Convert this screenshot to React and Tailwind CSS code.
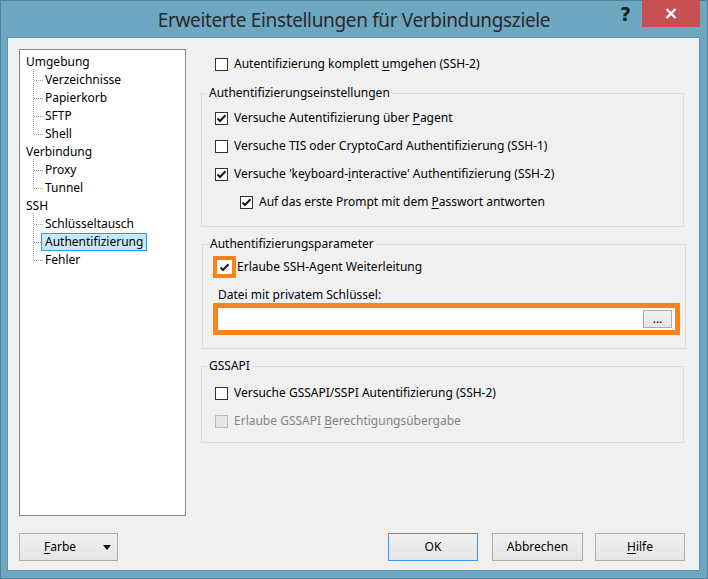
import React from "react";

const FONT = "font-['Noto_Sans',sans-serif]";

function Check({ disabled }) {
  return (
    <svg width="13" height="13" viewBox="0 0 13 13" className="block">
      <path d="M2.5 6.5 L5 9 L10.5 3.2" fill="none" stroke={disabled ? "#9a9a9a" : "#1a1a1a"} strokeWidth="2" />
    </svg>
  );
}

function CheckBox({ checked, disabled }) {
  return (
    <div
      className={
        "w-[13px] h-[13px] shrink-0 border " +
        (disabled ? "border-[#bcbcbc] bg-[#e6e6e6]" : "border-[#333333] bg-white")
      }
    >
      {checked ? <div className="-m-px"><Check disabled={disabled} /></div> : null}
    </div>
  );
}

function Row({ checked, disabled, children, indent = "pl-[13px]" }) {
  return (
    <div className={"flex items-center h-[18px] " + indent}>
      <CheckBox checked={checked} disabled={disabled} />
      <span className={"ml-[6px] text-[12px] leading-[16px] whitespace-nowrap " + (disabled ? "text-[#838383]" : "text-black")}>
        {children}
      </span>
    </div>
  );
}

function TreeGroup({ label, items, selected }) {
  return (
    <div>
      <div className="h-[18px] flex items-center pl-[2px]">
        <span className="border border-transparent px-[3px] leading-[16px]">{label}</span>
      </div>
      <div className="relative">
        <div
          className="absolute left-[13px] top-[-2px] w-0 border-l border-dotted border-[#a0a0a0]"
          style={{ height: (items.length - 1) * 18 + 11 }}
        />
        {items.map((it) => (
          <div key={it} className="h-[18px] flex items-center">
            <span className="w-[14px] shrink-0" />
            <span className="w-[9px] shrink-0 border-t border-dotted border-[#a0a0a0]" />
            <span
              className={
                "-ml-[2px] px-[3px] leading-[16px] border relative " +
                (it === selected ? "bg-[#cbe8f6] border-[#26a0da]" : "border-transparent")
              }
            >
              {it}
            </span>
          </div>
        ))}
      </div>
    </div>
  );
}

function Btn({ children, className = "", focus }) {
  return (
    <div
      className={
        "h-[28px] flex items-center justify-center text-[12px] text-black bg-gradient-to-b from-[#f0f0f0] to-[#e5e5e5] border " +
        (focus ? "border-[#3399ff] " : "border-[#acacac] ") +
        className
      }
    >
      {children}
    </div>
  );
}

export default function App() {
  return (
    <div className={"w-[708px] h-[579px] bg-[#6ea7c2] border border-[#4f819b] flex flex-col " + FONT}>
      <div className="relative h-[36px] flex items-center justify-center">
        <span className="text-[19px] text-[#2a2a2a] tracking-[-0.35px] mt-[3px]">
          Erweiterte Einstellungen für Verbindungsziele
        </span>
        <div className="absolute right-[7px] top-[-1px] flex items-start">
          <span className="text-[19px] font-bold text-[#1f1f1f] leading-[22px] mr-[11px] mt-[3px] font-['DejaVu_Sans',sans-serif]">?</span>
          <div className="w-[58px] h-[27px] bg-[#c75050] flex items-center justify-center">
            <svg width="12" height="11" viewBox="0 0 12 11">
              <path d="M1.5 1 L10.5 10 M10.5 1 L1.5 10" stroke="white" strokeWidth="2.4" />
            </svg>
          </div>
        </div>
      </div>
      <div className="ml-[6px] mr-[7px] h-[534px] border border-[#5e93ad] bg-[#f0f0f0] flex flex-col">
        <div className="flex items-start pt-[11px] pl-[11px]">
          <div className="w-[167px] h-[467px] bg-white border border-[#828790] pt-[3px] text-[12px] text-black">
            <TreeGroup label="Umgebung" items={["Verzeichnisse", "Papierkorb", "SFTP", "Shell"]} />
            <TreeGroup label="Verbindung" items={["Proxy", "Tunnel"]} />
            <TreeGroup label="SSH" items={["Schlüsseltausch", "Authentifizierung", "Fehler"]} selected="Authentifizierung" />
          </div>
          <div className="ml-[15px] flex flex-col">
            <div className="mt-[6px]">
              <Row indent="pl-[14px]">
                Autentifizierung komplett <u className="underline-offset-2">u</u>mgehen (SSH-2)
              </Row>
            </div>
            <fieldset className="mt-[12px] w-[483px] border border-[#dcdcdc] pt-[8px] pb-[15px] flex flex-col gap-[10px]">
              <legend className="ml-[5px] px-[2px] text-[12px] leading-[16px] text-black">Authentifizierungseinstellungen</legend>
              <Row checked>
                Versuche Autentifizierung über <u className="underline-offset-2">P</u>agent
              </Row>
              <Row>Versuche TIS oder CryptoCard Authentifizierung (SSH-1)</Row>
              <Row checked>
                Versuche 'keyboard-<u className="underline-offset-2">i</u>nteractive' Authentifizierung (SSH-2)
              </Row>
              <Row checked indent="pl-[38px]">
                Auf das erste Prompt mit dem <u className="underline-offset-2">P</u>asswort antworten
              </Row>
            </fieldset>
            <fieldset className="mt-[9px] ml-[1px] w-[484px] border border-[#dcdcdc] pt-[4px] pb-[13px] flex flex-col">
              <legend className="ml-[5px] px-[2px] text-[12px] leading-[16px] text-black">Authentifizierungsparameter</legend>
              <div className="flex items-center h-[22px] pl-[10px]">
                <div className="w-[23px] h-[22px] border-[4px] border-[#f7821e] bg-white flex items-center justify-center">
                  <Check />
                </div>
                <span className="ml-[1px] text-[12px] leading-[16px] text-black">Erlaube SSH-Agent Weiterleitung</span>
              </div>
              <div className="mt-[10px] pl-[15px] text-[12px] leading-[14px] text-black">Datei mit privatem Schlüssel:</div>
              <div className="mt-[1px] ml-[10px] w-[467px] h-[32px] border-[5px] border-[#f7821e] bg-white flex items-center justify-end pr-[3px]">
                <div className="w-[29px] h-[18px] border border-[#adadad] bg-gradient-to-b from-[#f0f0f0] to-[#e5e5e5] flex items-end justify-center text-[12px] leading-[14px] text-black pb-[1px]">
                  ...
                </div>
              </div>
            </fieldset>
            <fieldset className="mt-[9px] w-[483px] border border-[#dcdcdc] pt-[10px] pb-[12px] flex flex-col gap-[10px]">
              <legend className="ml-[5px] px-[2px] text-[12px] leading-[16px] text-black">GSSAPI</legend>
              <Row>Versuche GSSAPI/SSPI Autentifizierung (SSH-2)</Row>
              <Row disabled>
                Erlaube GSSAPI <u className="underline-offset-2">B</u>erechtigungsübergabe
              </Row>
            </fieldset>
          </div>
        </div>
        <div className="mt-[17px] flex pl-[11px] pr-[14px]">
          <Btn className="w-[99px] justify-start! pl-[24px] pr-[6px]">
            <span><u className="underline-offset-2">F</u>arbe</span>
            <svg width="8" height="5" viewBox="0 0 8 5" className="ml-auto">
              <path d="M0 0 L8 0 L4 5 Z" fill="#111" />
            </svg>
          </Btn>
          <Btn focus className="w-[90px] ml-auto">OK</Btn>
          <Btn className="w-[91px] ml-[14px]">Abbrechen</Btn>
          <Btn className="w-[90px] ml-[12px]">
            <span><u className="underline-offset-2">H</u>ilfe</span>
          </Btn>
        </div>
      </div>
    </div>
  );
}
